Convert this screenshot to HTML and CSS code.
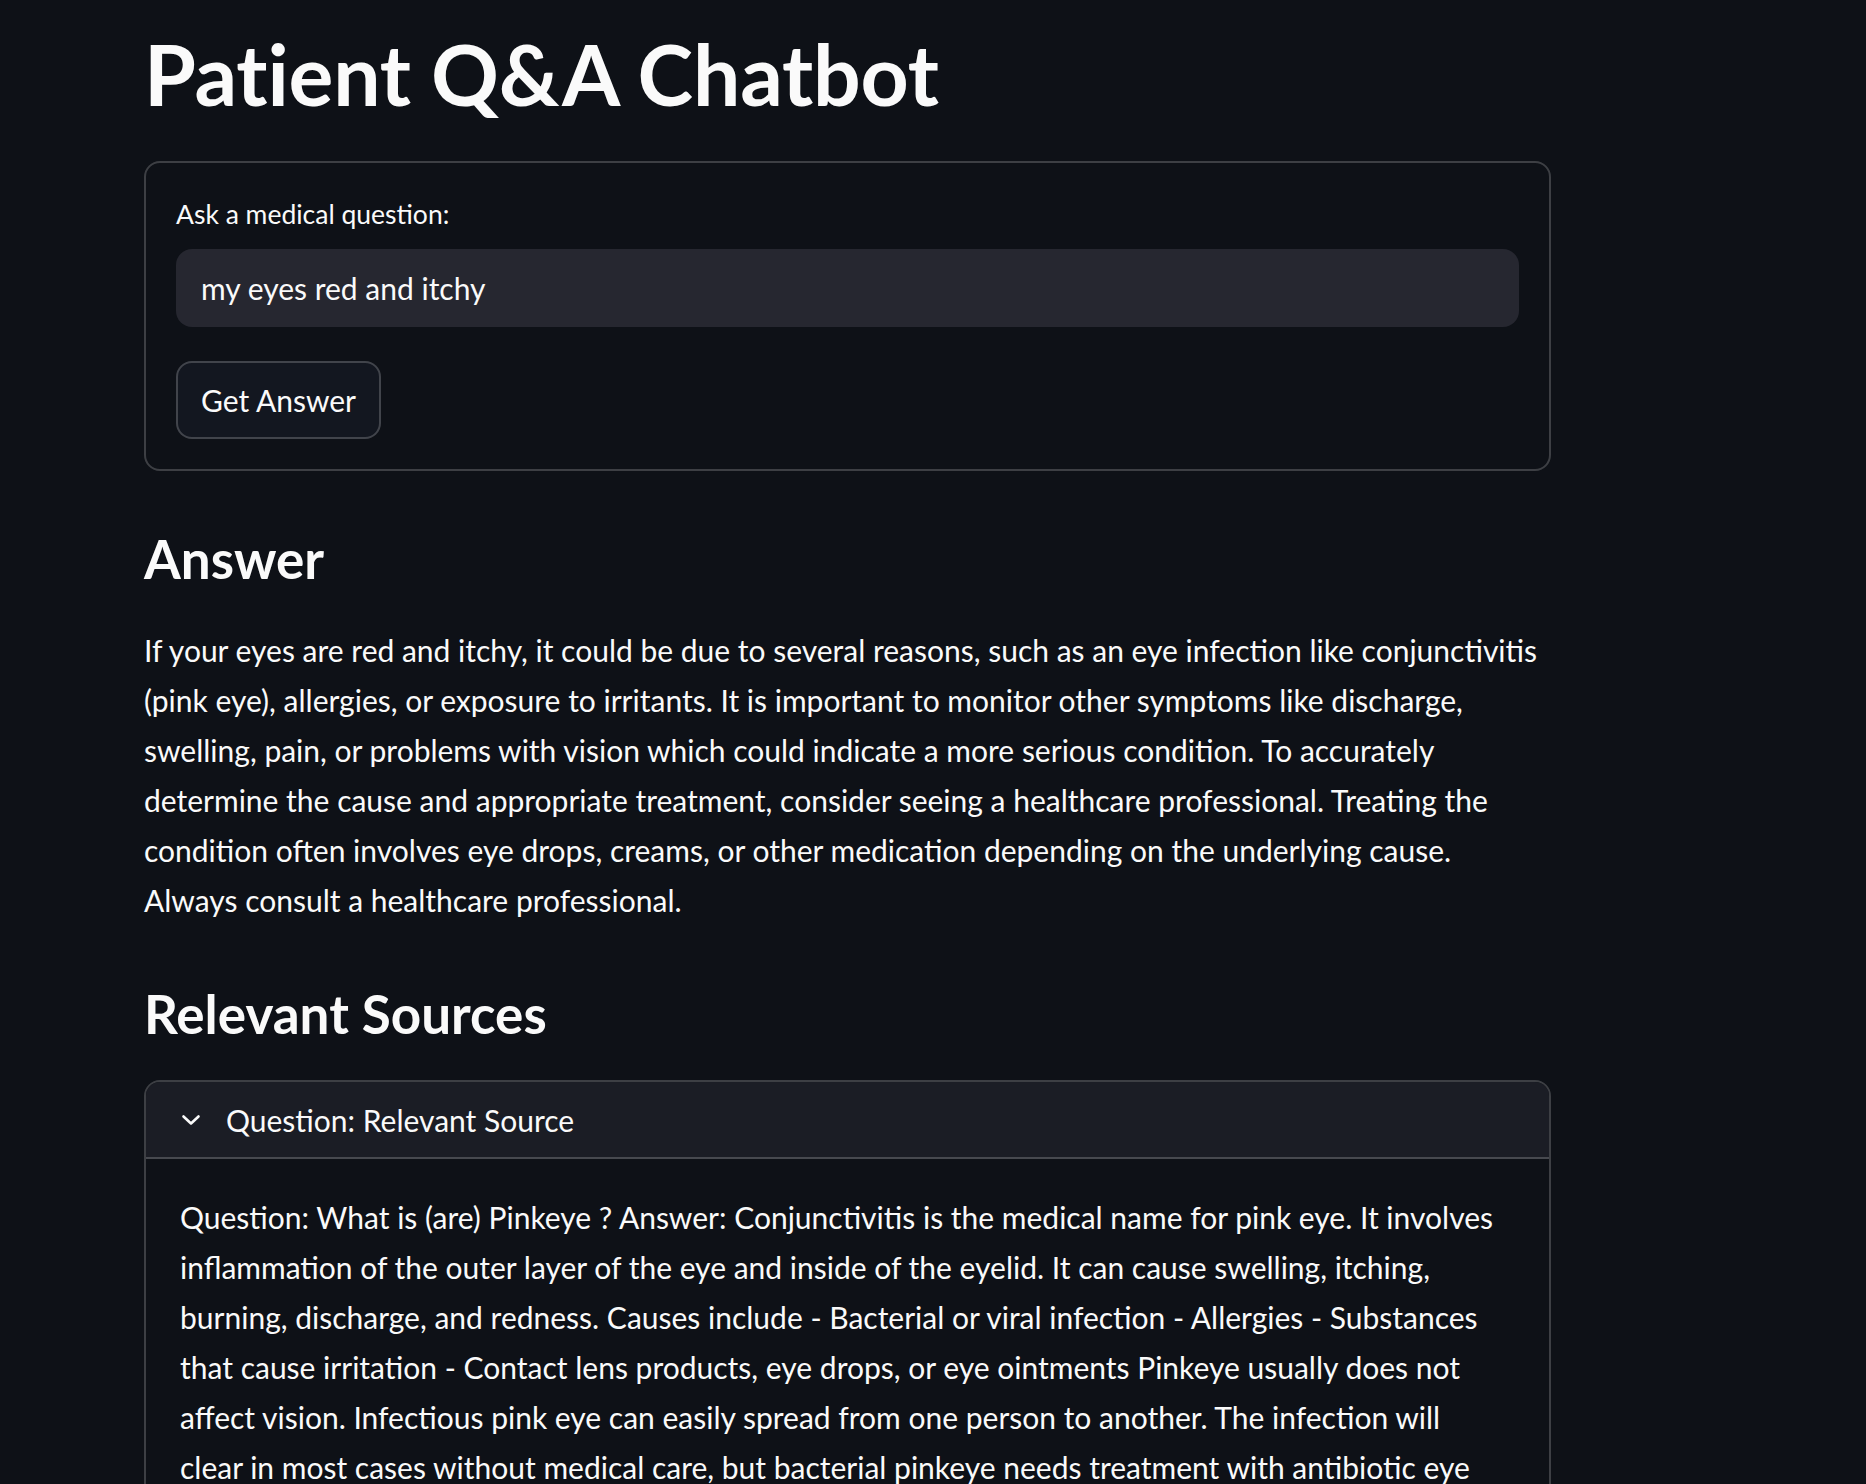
FILE: index.html
```html
<!DOCTYPE html>
<html lang="en">
<head>
<meta charset="utf-8">
<title>Patient Q&amp;A Chatbot</title>
<link rel="stylesheet" href="styles.css">
</head>
<body>
<main class="page">
  <h1 class="title">Patient Q&amp;A Chatbot</h1>

  <form class="ask-form">
    <label class="field-label" for="question">Ask a medical question:</label>
    <input class="text-input" id="question" type="text" value="my eyes red and itchy">
    <div class="btn-row">
      <button class="btn" type="button">Get Answer</button>
    </div>
  </form>

  <h3 class="section-title section-answer">Answer</h3>
  <p class="answer">If your eyes are red and itchy, it could be due to several reasons, such as an eye infection like conjunctivitis (pink eye), allergies, or exposure to irritants. It is important to monitor other symptoms like discharge, swelling, pain, or problems with vision which could indicate a more serious condition. To accurately determine the cause and appropriate treatment, consider seeing a healthcare professional. Treating the condition often involves eye drops, creams, or other medication depending on the underlying cause. Always consult a healthcare professional.</p>

  <h3 class="section-title section-sources">Relevant Sources</h3>

  <details class="expander" open>
    <summary class="expander-head">
      <svg class="chevron" width="20" height="12" viewBox="0 0 20 12" aria-hidden="true"><polyline points="2.5,2.5 10,9.5 17.5,2.5" fill="none" stroke="#fafafa" stroke-width="2.6" stroke-linecap="round" stroke-linejoin="round"/></svg>
      <span class="expander-label">Question: Relevant Source</span>
    </summary>
    <div class="expander-body">
      <p class="source-text">Question: What is (are) Pinkeye ? Answer: Conjunctivitis is the medical name for pink eye. It involves inflammation of the outer layer of the eye and inside of the eyelid. It can cause swelling, itching, burning, discharge, and redness. Causes include - Bacterial or viral infection - Allergies - Substances that cause irritation - Contact lens products, eye drops, or eye ointments Pinkeye usually does not affect vision. Infectious pink eye can easily spread from one person to another. The infection will clear in most cases without medical care, but bacterial pinkeye needs treatment with antibiotic eye drops or ointments. NIH: National Eye Institute</p>
    </div>
  </details>
</main>
</body>
</html>
```

FILE: styles.css
```css
html, body {
  margin: 0;
  padding: 0;
  background: #0e1117;
}

body {
  color: #fafafa;
  font-family: "Lato", "Source Sans Pro", "Noto Sans", sans-serif;
  overflow: hidden;
  height: 1484px;
}

.page {
  width: 1407px;
  padding: 24px 0 0 144px;
}

.title {
  margin: 0;
  font-size: 84px;
  line-height: 100px;
  font-weight: 700;
  letter-spacing: -0.2px;
}

.ask-form {
  margin: 37px 0 0;
  border: 2px solid rgba(250, 250, 250, 0.2);
  border-radius: 16px;
  padding: 31px 30px 30px;
  display: flex;
  flex-direction: column;
}

.field-label {
  font-size: 26.5px;
  line-height: 40px;
  height: 40px;
}

.text-input {
  margin-top: 15px;
  height: 78px;
  box-sizing: border-box;
  border: none;
  outline: none;
  border-radius: 16px;
  background: #262730;
  color: #fafafa;
  padding: 0 25px;
  font-family: inherit;
  font-size: 30px;
}

.btn-row {
  margin-top: 34px;
  display: flex;
}

.btn {
  height: 78px;
  box-sizing: border-box;
  padding: 0 23px;
  border: 2px solid rgba(250, 250, 250, 0.2);
  border-radius: 16px;
  background: #131720;
  color: #fafafa;
  font-family: inherit;
  font-size: 30px;
}

.section-title {
  margin: 0;
  font-size: 53px;
  line-height: 64px;
  font-weight: 700;
}

.section-answer {
  margin-top: 56px;
}

.answer {
  margin: 34px 0 0;
  font-size: 30px;
  line-height: 50px;
}

.section-sources {
  margin-top: 57px;
}

.expander {
  margin-top: 34px;
  border: 2px solid rgba(250, 250, 250, 0.2);
  border-radius: 16px;
  overflow: hidden;
}

.expander-head {
  list-style: none;
  display: flex;
  align-items: center;
  height: 75px;
  padding-left: 35px;
  background: #1b1d25;
  border-bottom: 2px solid rgba(250, 250, 250, 0.2);
  font-size: 30px;
}

.expander-head::-webkit-details-marker {
  display: none;
}

.chevron {
  flex: none;
  margin-right: 25px;
}

.expander-body {
  padding: 33px 43px 40px 34px;
}

.source-text {
  margin: 0;
  font-size: 30px;
  line-height: 50px;
}
```
